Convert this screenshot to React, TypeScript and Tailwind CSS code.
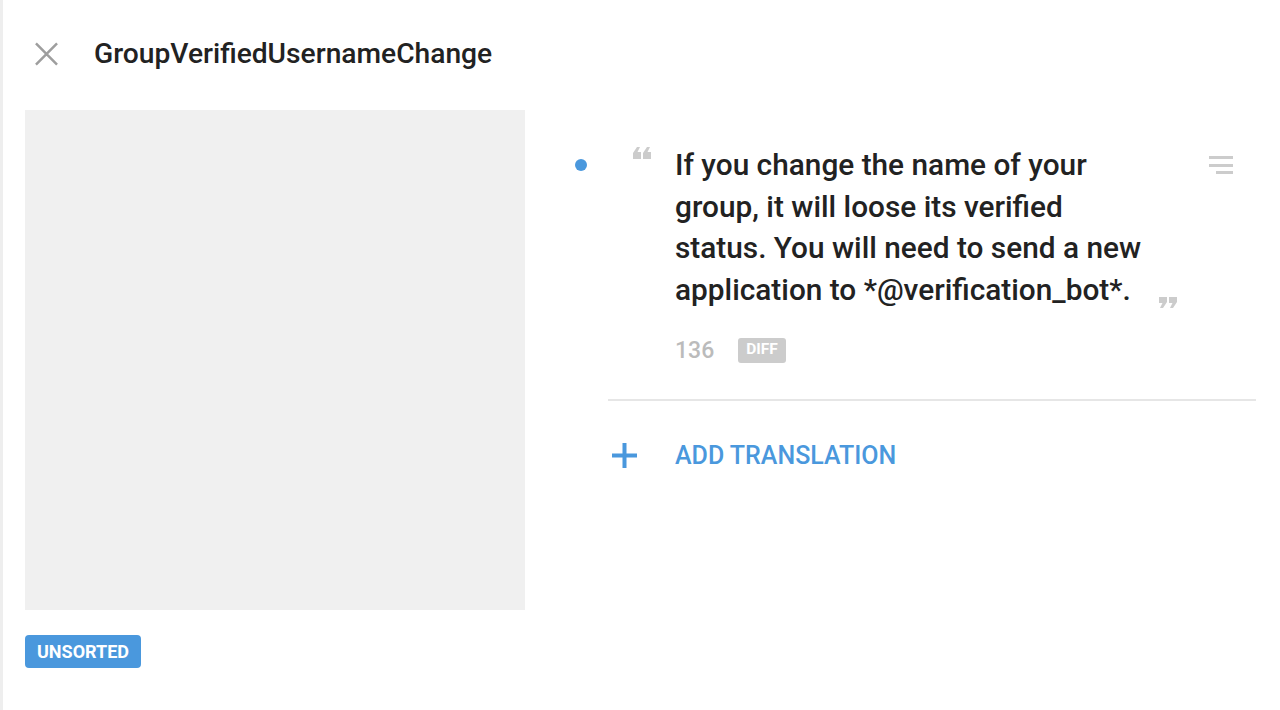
import React from "react";

function OpenQuote() {
  return (
    <svg width="19" height="12" viewBox="0 0 19 12">
      <path d="M0 12 V6 L4 0 H7 L4.5 5 H8 V12 Z" fill="#cccccc" />
      <path d="M10 12 V6 L14 0 H17 L14.5 5 H18 V12 Z" fill="#cccccc" />
    </svg>
  );
}

function CloseQuote() {
  return (
    <svg width="19" height="12" viewBox="0 0 19 12">
      <path d="M1 0 V6 H4.5 L2 11 H5 L9 5 V0 Z" fill="#cccccc" />
      <path d="M11 0 V6 H14.5 L12 11 H15 L19 5 V0 Z" fill="#cccccc" />
    </svg>
  );
}

export default function App() {
  return (
    <div
      className="w-[1280px] h-[710px] bg-white border-l-[3px] border-[#eeeeee] overflow-hidden relative"
      style={{ fontFamily: "Roboto, 'Noto Sans', sans-serif" }}
    >
      {/* Header */}
      <div className="flex items-center h-[108px]">
        <div className="ml-[32px] w-[23px] h-[23px] flex items-center justify-center">
          <svg width="24" height="24" viewBox="0 0 24 24">
            <path d="M1 1 L23 23 M23 1 L1 23" stroke="#9e9e9e" strokeWidth="2.6" />
          </svg>
        </div>
        <div className="ml-[36px] text-[28.2px] font-medium text-[#222222] leading-none">
          GroupVerifiedUsernameChange
        </div>
      </div>

      <div className="flex">
        {/* Left column */}
        <div className="ml-[22px] w-[500px] flex flex-col items-start">
          <div className="w-[500px] h-[500px] bg-[#f0f0f0] mt-[2px]" />
          <div className="mt-[25px] h-[33px] px-[12px] rounded-[4px] bg-[#4a98dd] text-white text-[18px] font-bold flex items-center leading-none">
            UNSORTED
          </div>
        </div>

        {/* Right column */}
        <div className="ml-[50px] w-[681px] flex flex-col mt-[36px]">
          <div className="flex items-start">
            <div className="w-[12px] h-[12px] rounded-full bg-[#4a98dd] mt-[15px]" />
            <div className="ml-[46px] mt-[3px] w-[19px] h-[12px] flex">
              <OpenQuote />
            </div>
            <div className="ml-[23px] w-[478px] flex flex-col">
              <div className="text-[29.8px] font-medium text-[#222222] leading-[41.5px]">
                If you change the name of your group, it will loose its verified status. You will need to send a new application to *@verification_bot*.
              </div>
              <div className="flex items-center mt-[28px] h-[24px]">
                <span className="text-[23px] text-[#bbbbbb] font-medium leading-none">136</span>
                <span className="ml-[24px] h-[25px] px-[8px] rounded-[3px] bg-[#cccccc] text-white text-[15.5px] font-bold flex items-center leading-none">
                  DIFF
                </span>
              </div>
            </div>
            <div className="ml-[5px] mt-[153px] w-[19px] h-[12px] flex">
              <CloseQuote />
            </div>
            <div className="ml-[32px] mt-[12px] w-[24px] flex flex-col items-end gap-[4.5px]">
              <div className="w-[24px] h-[3px] bg-[#cccccc]" />
              <div className="w-[24px] h-[3px] bg-[#cccccc]" />
              <div className="w-[17px] h-[3px] bg-[#cccccc]" />
            </div>
          </div>

          <div className="ml-[33px] mt-[37px] w-[648px] h-[2px] bg-[#e6e6e6]" />

          <div className="flex items-center mt-[42px] h-[24px]">
            <div className="ml-[37px] w-[25px] h-[25px] flex items-center justify-center">
              <svg width="25" height="25" viewBox="0 0 25 25">
                <path d="M12.5 0 V25 M0 12.5 H25" stroke="#4a98dd" strokeWidth="4" />
              </svg>
            </div>
            <div className="ml-[38px] text-[25px] font-medium text-[#4a98dd] leading-none">
              ADD TRANSLATION
            </div>
          </div>
        </div>
      </div>
    </div>
  );
}
